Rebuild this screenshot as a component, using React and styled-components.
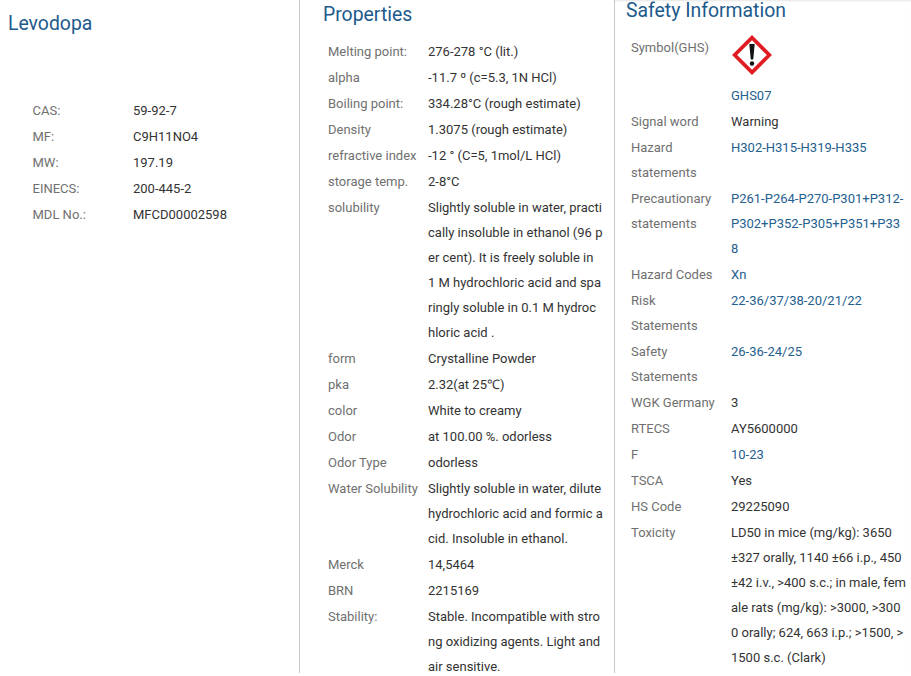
import React from "react";
import styled, { createGlobalStyle } from "styled-components";

const Global = createGlobalStyle`
  html, body { margin: 0; padding: 0; background: #fff; }
  body { font-family: Roboto, "Liberation Sans", sans-serif; }
`;
const Page = styled.div`
  display: grid;
  grid-template-columns: 300px 315px 296px;
  width: 911px;
  height: 673px;
  overflow: hidden;
  font-size: 13px;
  line-height: 25px;
`;
const Column = styled.section`
  box-sizing: border-box;
  height: 673px;
  overflow: hidden;
  padding: ${(p) => p.$pad};
  border-right: ${(p) => (p.$divider ? "1px solid #c9c9c9" : "none")};
  box-shadow: ${(p) => (p.$shaded ? "inset 0 2px 2px -1px #e6e6e6" : "none")};
`;
const Title = styled.h2`
  margin: ${(p) => p.$margin};
  font-size: 19.4px;
  font-weight: 400;
  line-height: 24px;
  color: #1d5a8c;
`;
const Rows = styled.dl`
  margin: ${(p) => p.$margin || 0};
  display: grid;
  grid-template-columns: ${(p) => p.$cols};
  row-gap: 1px;
`;
const Label = styled.dt`
  color: #707070;
  padding-right: 8px;
`;
const Value = styled.dd`
  margin: 0;
  color: ${(p) => (p.$link ? "#24608f" : "#333333")};
  word-break: break-all;
`;
const SymbolCell = styled.div`
  display: flex;
  flex-direction: column;
  align-items: flex-start;
`;
const Pictogram = styled.svg`
  display: block;
  width: 42px;
  height: 42px;
  margin-top: -1px;
  margin-bottom: 7px;
`;

const left = [
  ["CAS:", "59-92-7"],
  ["MF:", "C9H11NO4"],
  ["MW:", "197.19"],
  ["EINECS:", "200-445-2"],
  ["MDL No.:", "MFCD00002598"],
];
const props = [
  ["Melting point:", "276-278 °C (lit.)"],
  ["alpha", "-11.7 º (c=5.3, 1N HCl)"],
  ["Boiling point:", "334.28°C (rough estimate)"],
  ["Density", "1.3075 (rough estimate)"],
  ["refractive index", "-12 ° (C=5, 1mol/L HCl)"],
  ["storage temp.", "2-8°C"],
  ["solubility", "Slightly soluble in water, practically insoluble in ethanol (96 per cent). It is freely soluble in 1 M hydrochloric acid and sparingly soluble in 0.1 M hydrochloric acid ."],
  ["form", "Crystalline Powder"],
  ["pka", "2.32(at 25℃)"],
  ["color", "White to creamy"],
  ["Odor", "at 100.00 %. odorless"],
  ["Odor Type", "odorless"],
  ["Water Solubility", "Slightly soluble in water, dilute hydrochloric acid and formic acid. Insoluble in ethanol."],
  ["Merck", "14,5464"],
  ["BRN", "2215169"],
  ["Stability:", "Stable. Incompatible with strong oxidizing agents. Light and air sensitive."],
];
const safety = [
  ["Signal word", "Warning"],
  ["Hazard statements", "H302-H315-H319-H335", true],
  ["Precautionary statements", "P261-P264-P270-P301+P312-P302+P352-P305+P351+P338", true],
  ["Hazard Codes", "Xn", true],
  ["Risk Statements", "22-36/37/38-20/21/22", true],
  ["Safety Statements", "26-36-24/25", true],
  ["WGK Germany", "3"],
  ["RTECS", "AY5600000"],
  ["F", "10-23", true],
  ["TSCA", "Yes"],
  ["HS Code", "29225090"],
  ["Toxicity", "LD50 in mice (mg/kg): 3650 ±327 orally, 1140 ±66 i.p., 450 ±42 i.v., >400 s.c.; in male, female rats (mg/kg): >3000, >3000 orally; 624, 663 i.p.; >1500, >1500 s.c. (Clark)"],
];

export default function App() {
  return (
    <Page>
      <Global />
      <Column $divider $pad="12px 0 0 8px">
        <Title $margin="0 0 62px">Levodopa</Title>
        <Rows $margin="0 0 0 24.5px" $cols="100.5px 150px">
          {left.map(([k, v]) => (
            <React.Fragment key={k}>
              <Label>{k}</Label>
              <Value>{v}</Value>
            </React.Fragment>
          ))}
        </Rows>
      </Column>
      <Column $divider $pad="3px 0 0 23px">
        <Title $margin="0 0 12px">Properties</Title>
        <Rows $margin="0 0 0 5px" $cols="100px 175px">
          {props.map(([k, v]) => (
            <React.Fragment key={k}>
              <Label>{k}</Label>
              <Value>{v}</Value>
            </React.Fragment>
          ))}
        </Rows>
      </Column>
      <Column $shaded $pad="0 0 0 11px">
        <Title $margin="-1px 0 12px">Safety Information</Title>
        <Rows $margin="0 0 0 5px" $cols="100px 176px">
          <Label>Symbol(GHS)</Label>
          <Value $link>
            <SymbolCell>
              <Pictogram viewBox="0 0 42 42">
                <rect x="8.7" y="8.7" width="24.6" height="24.6" transform="rotate(45 21 21)" fill="#fff" stroke="#e01b22" strokeWidth="3.6" />
                <path d="M18.3 10h5.4l-1.5 15.5h-2.4z" fill="#111" />
                <circle cx="21" cy="29.5" r="2.2" fill="#111" />
              </Pictogram>
              GHS07
            </SymbolCell>
          </Value>
          {safety.map(([k, v, link]) => (
            <React.Fragment key={k}>
              <Label>{k}</Label>
              <Value $link={link}>{v}</Value>
            </React.Fragment>
          ))}
        </Rows>
      </Column>
    </Page>
  );
}
